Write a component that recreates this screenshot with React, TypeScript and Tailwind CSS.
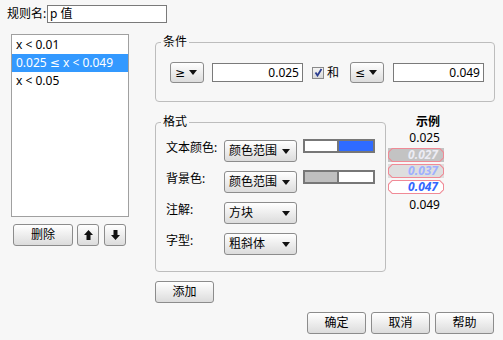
import { ReactNode } from 'react'

function Arrow() {
  return (
    <svg width="8" height="5" viewBox="0 0 8 5">
      <polygon points="0,0 8,0 4,5" fill="#111" />
    </svg>
  )
}

function Dropdown({ label, w, h = 22 }: { label: string; w: string; h?: number }) {
  return (
    <div
      className={`flex items-center justify-between ${w} ${h === 22 ? 'h-[22px]' : 'h-[21px]'} border border-[#8c8c8c] rounded-[3px] bg-linear-to-b from-white to-[#dcdcdc] pl-[4px] pr-[6px] shrink-0`}
    >
      <span className="leading-[16px]">{label}</span>
      <Arrow />
    </div>
  )
}

function Btn({ children, w, cls = '' }: { children: ReactNode; w: string; cls?: string }) {
  return (
    <div
      className={`flex items-center justify-center ${w} h-[22px] border border-[#8c8c8c] rounded-[3px] bg-linear-to-b from-white to-[#dcdcdc] shrink-0 ${cls}`}
    >
      {children}
    </div>
  )
}

function Legend({ children }: { children: ReactNode }) {
  return <legend className="ml-[5px] px-[2px] leading-[16px]">{children}</legend>
}

// sample chip with clipped corners, like the reference
function Chip({ value, text, bg, outer }: { value: string; text: string; bg: string; outer: string }) {
  return (
    <div className={`mt-[2px] h-[14px] ${outer}`}>
      <div className="h-[14px] bg-[#f08a96] [clip-path:polygon(4px_0,calc(100%-4px)_0,100%_4px,100%_calc(100%-4px),calc(100%-4px)_100%,4px_100%,0_calc(100%-4px),0_4px)] p-[1px]">
        <div
          className={`h-[12px] ${bg} ${text} [clip-path:polygon(3.5px_0,calc(100%-3.5px)_0,100%_3.5px,100%_calc(100%-3.5px),calc(100%-3.5px)_100%,3.5px_100%,0_calc(100%-3.5px),0_3.5px)] pr-[5px] italic font-bold leading-[12px]`}
        >
          {value}
        </div>
      </div>
    </div>
  )
}

const rows = ['x < 0.01', '0.025 ≤ x < 0.049', 'x < 0.05']

export default function App() {
  return (
    <div className="w-[503px] h-[340px] bg-[#f7f7f7] text-[12px] text-black font-['Noto_Sans','DejaVu_Sans','Noto_Sans_CJK_SC',sans-serif] overflow-hidden">
      {/* name */}
      <div className="flex items-center pt-[5px] pl-[7px]">
        <span className="w-[40px] leading-[16px]">规则名:</span>
        <div className="w-[120px] h-[18px] border border-[#7a7a7a] bg-white flex items-center pl-[2px] leading-[16px]">
          p 值
        </div>
      </div>

      <div className="flex mt-[11px]">
        {/* left list */}
        <div className="ml-[11px] w-[118px] flex flex-col">
          <div className="h-[183px] border border-[#a0a0a0] bg-white pt-[1px]">
            {rows.map((r, i) => (
              <div
                key={r}
                className={`h-[18px] flex items-center pl-[4px] leading-[16px] whitespace-pre ${i === 1 ? 'bg-[#3399ff] text-white' : ''}`}
              >
                {r}
              </div>
            ))}
          </div>
          <div className="flex mt-[7px]">
            <Btn w="w-[60px]" cls="ml-[2px]">删除</Btn>
            <Btn w="w-[22px]" cls="ml-[4px] border-[#3aa6d6]">
              <svg width="9" height="10" viewBox="0 0 9 10">
                <polygon points="4.5,0 9,5 6.5,5 6.5,10 2.5,10 2.5,5 0,5" fill="#111" />
              </svg>
            </Btn>
            <Btn w="w-[22px]" cls="ml-[5px]">
              <svg width="9" height="10" viewBox="0 0 9 10">
                <polygon points="4.5,10 9,5 6.5,5 6.5,0 2.5,0 2.5,5 0,5" fill="#111" />
              </svg>
            </Btn>
          </div>
        </div>

        {/* right side */}
        <div className="ml-[26px] flex flex-col">
          <fieldset className="w-[340px] h-[68px] border border-[#bdbdbd] rounded-[4px]">
            <Legend>条件</Legend>
            <div className="flex items-center mt-[12px] pl-[14px]">
              <Dropdown label="≥" w="w-[34px]" h={21} />
              <div className="ml-[8px] w-[91px] h-[19px] border border-[#7a7a7a] bg-white text-right pr-[3px] leading-[17px]">
                0.025
              </div>
              <div className="ml-[9px] w-[12px] h-[12px] border border-[#8a8a8a] bg-linear-to-b from-[#f4f4f4] to-[#d8d8d8] flex items-center justify-center">
                <svg width="9" height="9" viewBox="0 0 9 9">
                  <path d="M1.5 4.5 L3.5 7.5 L7.5 1" stroke="#2b3d8f" strokeWidth="1.8" fill="none" />
                </svg>
              </div>
              <span className="ml-[3px] w-[23px] leading-[16px]">和</span>
              <Dropdown label="≤" w="w-[34px]" h={21} />
              <div className="ml-[9px] w-[91px] h-[19px] border border-[#7a7a7a] bg-white text-right pr-[3px] leading-[17px]">
                0.049
              </div>
            </div>
          </fieldset>

          <div className="flex mt-[12px]">
            <fieldset className="w-[231px] h-[158px] border border-[#bdbdbd] rounded-[4px]">
              <Legend>格式</Legend>
              <div className="flex flex-col gap-[9px] mt-[10px] pl-[10px]">
                <div className="flex items-start">
                  <span className="w-[58px] leading-[16px]">文本颜色:</span>
                  <Dropdown label="颜色范围" w="w-[73px]" />
                  <div className="ml-[6px] -mt-[1px] w-[72px] h-[14px] border-2 border-[#777] flex">
                    <div className="w-[34px] bg-white border-r-2 border-[#777]" />
                    <div className="flex-1 bg-[#2f6bff]" />
                  </div>
                </div>
                <div className="flex items-start">
                  <span className="w-[58px] leading-[16px]">背景色:</span>
                  <Dropdown label="颜色范围" w="w-[73px]" />
                  <div className="ml-[6px] -mt-[1px] w-[72px] h-[14px] border-2 border-[#777] flex">
                    <div className="w-[34px] bg-[#bfbfbf] border-r-2 border-[#777]" />
                    <div className="flex-1 bg-white" />
                  </div>
                </div>
                <div className="flex items-start">
                  <span className="w-[58px] leading-[16px]">注解:</span>
                  <Dropdown label="方块" w="w-[73px]" />
                </div>
                <div className="flex items-start">
                  <span className="w-[58px] leading-[16px]">字型:</span>
                  <Dropdown label="粗斜体" w="w-[73px]" />
                </div>
              </div>
            </fieldset>

            <div className="ml-[2px] w-[56px] flex flex-col text-right">
              <div className="leading-[16px] pr-[4px] font-bold">示例</div>
              <div className="leading-[16px] pr-[4px]">0.025</div>
              <Chip value="0.027" bg="bg-[#c3c3c3]" text="text-[#ececf4]" outer="bg-[#c3c3c3]" />
              <Chip value="0.037" bg="bg-[#dedede]" text="text-[#9fb0ff]" outer="bg-[#dedede]" />
              <Chip value="0.047" bg="bg-white" text="text-[#3366ff]" outer="" />
              <div className="mt-[3px] leading-[16px] pr-[4px]">0.049</div>
            </div>
          </div>

          <Btn w="w-[59px]" cls="mt-[9px]">添加</Btn>
        </div>
      </div>

      <div className="flex justify-end gap-[5px] pr-[9px] mt-[9px]">
        <Btn w="w-[59px]">确定</Btn>
        <Btn w="w-[59px]">取消</Btn>
        <Btn w="w-[59px]">帮助</Btn>
      </div>
    </div>
  )
}
